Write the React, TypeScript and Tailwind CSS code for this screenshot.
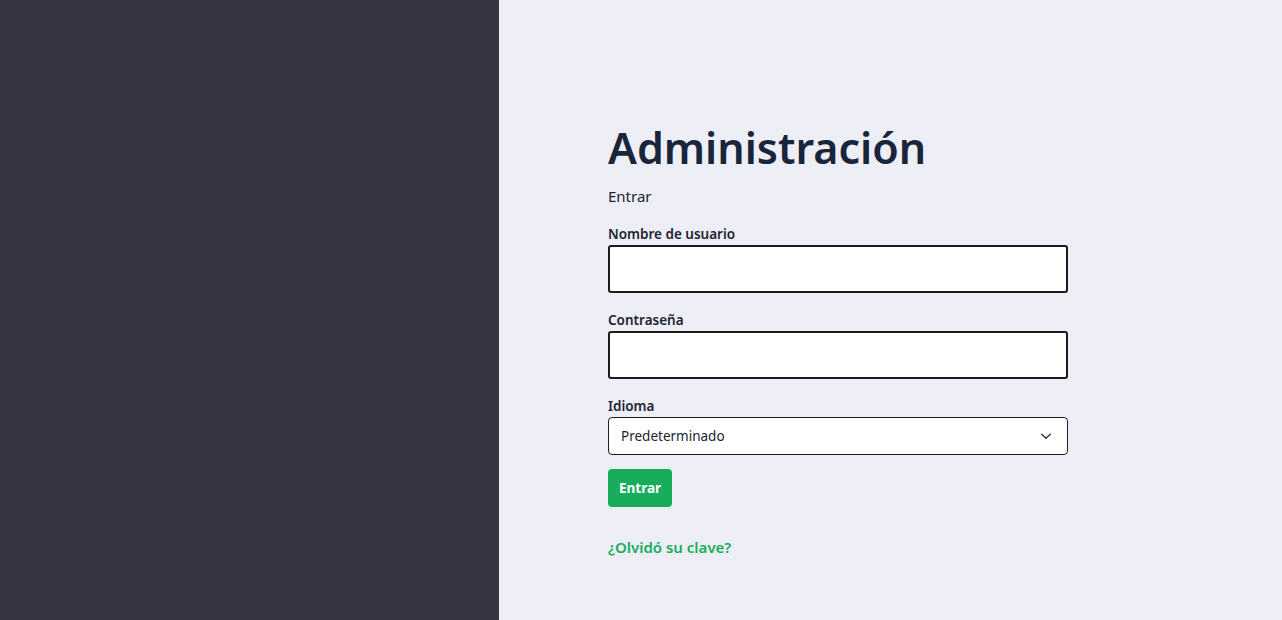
import React from "react";

export default function App() {
  return (
    <div className="flex h-[620px] w-full" style={{ fontFamily: '"Noto Sans", "Open Sans", sans-serif' }}>
      <div className="w-[499px] shrink-0 bg-[#343541]" />
      <div className="flex-1 bg-[#eeeef6] pl-[109px] pt-[118px]">
        <div className="w-[460px]">
          <h1 className="text-[43px] leading-[60px] font-semibold text-[#18253a]">Administración</h1>
          <p className="mt-[7px] text-[15px] leading-[22px] text-[#1b2433]">Entrar</p>
          <form className="mt-[17px]">
            <label className="block text-[13.5px] leading-[20px] font-semibold text-[#1b2433]">Nombre de usuario</label>
            <input className="mt-[1px] block h-[48px] w-full rounded-[3px] border-2 border-[#1c1c1e] bg-white px-3 outline-none" />
            <label className="mt-[17px] block text-[13.5px] leading-[20px] font-semibold text-[#1b2433]">Contraseña</label>
            <input type="password" className="mt-[1px] block h-[48px] w-full rounded-[3px] border-2 border-[#1c1c1e] bg-white px-3 outline-none" />
            <label className="mt-[17px] block text-[13.5px] leading-[20px] font-semibold text-[#1b2433]">Idioma</label>
            <div className="relative mt-[1px] flex h-[38px] w-full items-center rounded-[4px] border border-[#1c1c1e] bg-white pl-[12px] pr-[14px]">
              <span className="flex-1 text-[13.5px] text-[#1b2433]">Predeterminado</span>
              <svg width="14" height="14" viewBox="0 0 16 16" fill="none" stroke="#333" strokeWidth="1.6" strokeLinecap="round" strokeLinejoin="round">
                <path d="M3 6l5 4.5L13 6" />
              </svg>
            </div>
            <button type="button" className="mt-[14px] flex h-[38px] w-[64px] items-center justify-center rounded-[4px] bg-[#17ad5b] text-[13.5px] font-bold text-white">
              Entrar
            </button>
            <a className="mt-[29px] block text-[15px] leading-[22px] font-semibold text-[#17ad5b]">¿Olvidó su clave?</a>
          </form>
        </div>
      </div>
    </div>
  );
}
